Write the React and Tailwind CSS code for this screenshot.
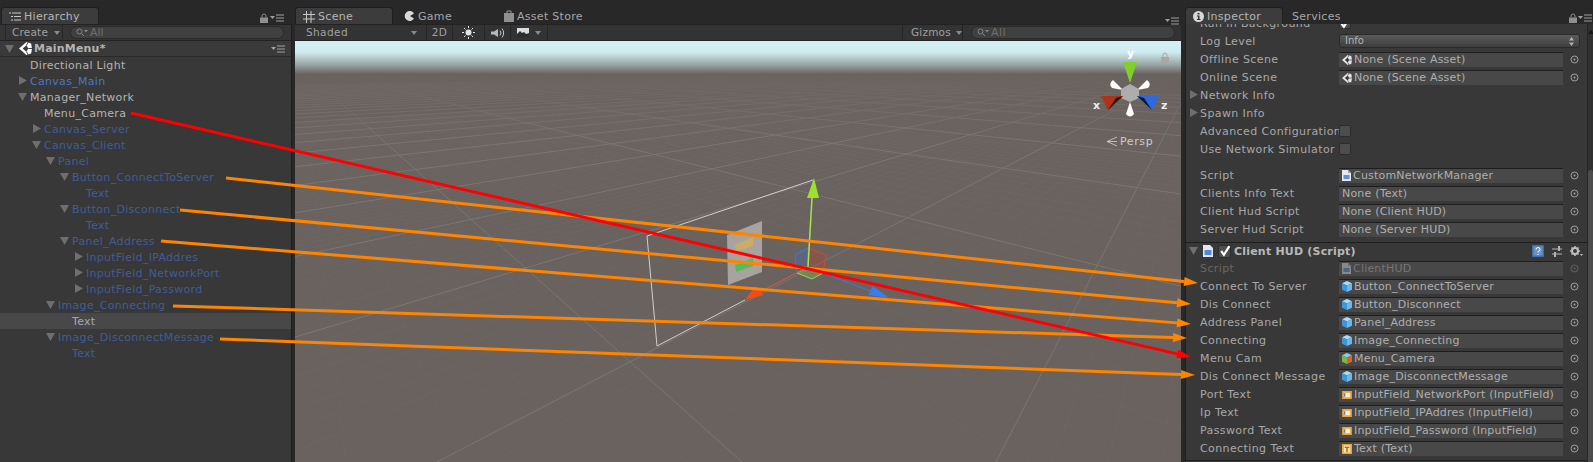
import React from 'react'

const TREE = [
  { label: 'Directional Light', depth: 0, tone: 'plain' },
  { label: 'Canvas_Main', depth: 0, arrow: 'right', tone: 'bright' },
  { label: 'Manager_Network', depth: 0, arrow: 'down', tone: 'plain' },
  { label: 'Menu_Camera', depth: 1, tone: 'plain' },
  { label: 'Canvas_Server', depth: 1, arrow: 'right' },
  { label: 'Canvas_Client', depth: 1, arrow: 'down' },
  { label: 'Panel', depth: 2, arrow: 'down' },
  { label: 'Button_ConnectToServer', depth: 3, arrow: 'down' },
  { label: 'Text', depth: 4 },
  { label: 'Button_Disconnect', depth: 3, arrow: 'down' },
  { label: 'Text', depth: 4 },
  { label: 'Panel_Address', depth: 3, arrow: 'down' },
  { label: 'InputField_IPAddres', depth: 4, arrow: 'right' },
  { label: 'InputField_NetworkPort', depth: 4, arrow: 'right' },
  { label: 'InputField_Password', depth: 4, arrow: 'right' },
  { label: 'Image_Connecting', depth: 2, arrow: 'down' },
  { label: 'Text', depth: 3, selected: true },
  { label: 'Image_DisconnectMessage', depth: 2, arrow: 'down' },
  { label: 'Text', depth: 3 },
]

const MANAGER_FIELDS = [
  { label: 'Script', value: 'CustomNetworkManager', icon: 'script' },
  { label: 'Clients Info Text', value: 'None (Text)' },
  { label: 'Client Hud Script', value: 'None (Client HUD)' },
  { label: 'Server Hud Script', value: 'None (Server HUD)' },
]

const HUD_FIELDS = [
  { label: 'Script', value: 'ClientHUD', icon: 'script', dim: true },
  { label: 'Connect To Server', value: 'Button_ConnectToServer', icon: 'prefab' },
  { label: 'Dis Connect', value: 'Button_Disconnect', icon: 'prefab' },
  { label: 'Address Panel', value: 'Panel_Address', icon: 'prefab' },
  { label: 'Connecting', value: 'Image_Connecting', icon: 'prefab' },
  { label: 'Menu Cam', value: 'Menu_Camera', icon: 'camera' },
  { label: 'Dis Connect Message', value: 'Image_DisconnectMessage', icon: 'prefab' },
  { label: 'Port Text', value: 'InputField_NetworkPort (InputField)', icon: 'input' },
  { label: 'Ip Text', value: 'InputField_IPAddres (InputField)', icon: 'input' },
  { label: 'Password Text', value: 'InputField_Password (InputField)', icon: 'input' },
  { label: 'Connecting Text', value: 'Text (Text)', icon: 'text' },
]

const ARROWS = [
  { from: [226, 178], to: [1198, 283], color: '#ff8400' },
  { from: [180, 210], to: [1191, 304], color: '#ff8400' },
  { from: [161, 241], to: [1191, 324], color: '#ff8400' },
  { from: [173, 306], to: [1187, 338], color: '#ff8400' },
  { from: [220, 339], to: [1195, 375], color: '#ff8400' },
  { from: [131, 113], to: [1191, 357], color: '#ff0000' },
]

// grid families meet the bottom edge at even steps, then run to a vanishing point
const BOTTOM = 462
const HORIZON = 66
const LEFT_VP = 300
const RIGHT_VP = 1200
const RISING = Array.from({ length: 34 }, (_, i) => 996 - 559 * i)
const FALLING = Array.from({ length: 14 }, (_, i) => 742 + 1142 * (i - 3))
const RISING_MINOR = Array.from({ length: 120 }, (_, i) => 1555 - 55.9 * i)
const FALLING_MINOR = Array.from({ length: 60 }, (_, i) => 4000 - 114.2 * i)

function Triangle({ dir = 'down', className = 'fill-[#6e6e6e]' }) {
  const points = dir === 'down' ? '0,1 9,1 4.5,9' : '1,0 9,4.5 1,9'
  return (
    <svg width="10" height="10" viewBox="0 0 10 10" className="shrink-0">
      <polygon points={points} className={className} />
    </svg>
  )
}

function Caret() {
  return (
    <svg width="6" height="4" viewBox="0 0 6 4" className="shrink-0">
      <polygon points="0,0 6,0 3,4" fill="#8a8a8a" />
    </svg>
  )
}

function PanelMenu() {
  return (
    <svg width="15" height="8" viewBox="0 0 15 8" className="shrink-0">
      <polygon points="0,2 5,2 2.5,5" fill="#a0a0a0" />
      <path d="M6 1h8M6 4h8M6 7h8" stroke="#a0a0a0" strokeWidth="1" />
    </svg>
  )
}

function Lock({ color = '#8f8f8f' }) {
  return (
    <svg width="8" height="10" viewBox="0 0 8 10" className="shrink-0">
      <path d="M2 4.5V3a2 2 0 0 1 4 0v1.5" fill="none" stroke={color} />
      <rect x="0" y="4.5" width="8" height="5.5" fill={color} />
    </svg>
  )
}

function UnityLogo({ size = 13, color = '#ffffff' }) {
  return (
    <svg width={size} height={size} viewBox="0 0 14 14" className="shrink-0">
      <path d="M8 0l5 1.5L14 7l-1 5.500L8 14 0 7z" fill={color} />
      <path d="M4 7l4-3.500L10 7l-2 3.500z" fill="#383838" />
      <path d="M8 3.500L10 0M10 7h4M8 10.500L10 14" stroke="#383838" />
    </svg>
  )
}

function ScriptIcon({ dim }) {
  return (
    <svg width="9" height="11" viewBox="0 0 9 11" className="shrink-0" opacity={dim ? 0.4 : 1}>
      <path d="M0 0h6l3 3v8H0z" fill="#e4e8ee" />
      <path d="M6 0l3 3H6z" fill="#9aa4b4" />
      <rect x="1.500" y="5" width="6" height="4" fill="#5c8fd6" />
    </svg>
  )
}

function CubeIcon({ top, left, right }) {
  return (
    <svg width="10" height="11" viewBox="0 0 11 12" className="shrink-0">
      <polygon points="5.500,0 11,2.500 5.500,5 0,2.500" fill={top} />
      <polygon points="0,2.500 5.500,5 5.500,12 0,9.500" fill={left} />
      <polygon points="11,2.500 5.500,5 5.500,12 11,9.500" fill={right} />
    </svg>
  )
}

function InputIcon() {
  return (
    <svg width="10" height="8" viewBox="0 0 11 9" className="shrink-0">
      <rect width="11" height="9" fill="#e8a33d" />
      <rect x="2" y="2" width="7" height="5" fill="#f1efe6" />
      <rect x="2.500" y="2.500" width="1" height="4" fill="#444444" />
    </svg>
  )
}

function TextIcon() {
  return (
    <svg width="10" height="10" viewBox="0 0 11 11" className="shrink-0">
      <rect width="11" height="11" fill="#eba83f" />
      <rect x="2" y="1.500" width="7" height="8" fill="#f7e3b5" />
      <path d="M3 3h5v1.500H6.300V9H4.700V4.500H3z" fill="#a8691a" />
    </svg>
  )
}

function FieldIcon({ type, dim }) {
  if (type === 'script') return <ScriptIcon dim={dim} />
  if (type === 'prefab') return <CubeIcon top="#a9dcf8" left="#3f96d8" right="#6cb8ea" />
  if (type === 'camera') return <CubeIcon top="#8ecbe8" left="#7ab648" right="#d8641e" />
  if (type === 'input') return <InputIcon />
  if (type === 'text') return <TextIcon />
  if (type === 'scene') return <UnityLogo size={10} color="#e6e6e6" />
  return null
}

function Tab({ active, icon, label, className = '' }) {
  return (
    <div
      className={`h-[17px] pt-[1px] flex items-center gap-[3px] text-[11px] tracking-[0.3px] ${
        active ? 'w-[98px] pl-[7px] rounded-t-[3px] bg-[#3c3c3c] border border-b-0 border-[#1f1f1f] text-[#b4b4b4]' : 'text-[#a6a6a6]'
      } ${className}`}
    >
      {icon}
      <span>{label}</span>
    </div>
  )
}

function SearchBox({ className = '' }) {
  return (
    <div className={`h-[13px] rounded-full bg-[#404040] border border-[#2a2a2a] flex items-center pl-[5px] gap-[1px] text-[#6f6f6f] ${className}`}>
      <svg width="13" height="9" viewBox="0 0 13 9" className="shrink-0">
        <circle cx="3.500" cy="3.500" r="2.500" fill="none" stroke="#858585" />
        <path d="M5.500 5.500L8 8" stroke="#858585" />
        <polygon points="8,2 12,2 10,4.500" fill="#858585" />
      </svg>
      <span className="text-[11px] leading-none">All</span>
    </div>
  )
}

function TreeRow({ label, depth, arrow, tone, selected }) {
  const textColor = tone === 'plain' ? 'text-[#b4b4b4]' : tone === 'bright' ? 'text-[#4a76c6]' : selected ? 'text-[#a3a7bb]' : 'text-[#3f5c98]'
  return (
    <div
      className={`h-[16px] flex items-center ${selected ? 'bg-[#484848]' : ''}`}
      style={{ paddingLeft: 18 + depth * 14 }}
    >
      <span className="w-[12px] flex items-center shrink-0">{arrow && <Triangle dir={arrow} />}</span>
      <span className={`${textColor} whitespace-nowrap tracking-[0.3px]`}>{label}</span>
    </div>
  )
}

function Hierarchy() {
  return (
    <div className="w-[295px] shrink-0 flex flex-col">
      <div className="h-[24px] pt-[7px] flex items-start">
        <Tab
          active
          className="ml-[1px]"
          label="Hierarchy"
          icon={
            <svg width="12" height="9" viewBox="0 0 12 9" className="shrink-0">
              <path d="M0 1h2M3 1h9M2 4.500h2M5 4.500h7M2 8h2M5 8h7" stroke="#c8c8c8" />
            </svg>
          }
        />
        <div className="ml-auto mr-[10px] mt-[6px] flex items-center gap-[2px]">
          <Lock />
          <PanelMenu />
        </div>
      </div>
      <div className="w-[292px] flex-1 flex flex-col bg-[#383838] border-r border-[#1c1c1c]">
        <div className="h-[17px] bg-[#353535] border-y border-[#222222] flex items-center">
          <div className="w-[58px] h-full border-x border-[#282828] ml-[5px] flex items-center gap-[6px] pl-[6px] text-[#a0a0a0] text-[10.500px] tracking-[0.2px]">
            Create
            <Caret />
          </div>
          <SearchBox className="w-[214px] ml-[7px]" />
        </div>
        <div className="h-[16px] bg-[#3a3a3a] border-b border-[#282828] flex items-center pl-[5px] pr-[5px]">
          <Triangle />
          <span className="ml-[4px]">
            <UnityLogo />
          </span>
          <span className="ml-[2px] font-bold text-[#b4b4b4] tracking-[0.2px]">MainMenu*</span>
          <span className="ml-auto">
            <PanelMenu />
          </span>
        </div>
        {TREE.map((row, i) => (
          <TreeRow key={i} {...row} />
        ))}
      </div>
    </div>
  )
}

function ToolCell({ className = '', children }) {
  return <div className={`h-full flex items-center justify-center border-r border-[#252525] ${className}`}>{children}</div>
}

function SceneDrawing() {
  return (
    <svg viewBox="295 41 886 421" className="absolute inset-0 w-full h-full">
      <defs>
        <linearGradient id="sky" x1="0" y1="0" x2="0" y2="1">
          <stop offset="0" stopColor="#d3eff3" />
          <stop offset="0.11" stopColor="#d0ecf0" />
          <stop offset="0.24" stopColor="#98a3a4" />
          <stop offset="0.33" stopColor="#6a625e" />
          <stop offset="0.6" stopColor="#6a625e" stopOpacity="0.55" />
          <stop offset="1" stopColor="#6a625e" stopOpacity="0" />
        </linearGradient>
      </defs>

      {RISING_MINOR.map((x) => (
        <line key={x} x1={x} y1={BOTTOM} x2={RIGHT_VP} y2={HORIZON} stroke="#7d7875" strokeOpacity="0.14" />
      ))}
      {FALLING_MINOR.map((x) => (
        <line key={x} x1={x} y1={BOTTOM} x2={LEFT_VP} y2={HORIZON} stroke="#7d7875" strokeOpacity="0.14" />
      ))}
      {RISING.map((x) => (
        <line key={x} x1={x} y1={BOTTOM} x2={RIGHT_VP} y2={HORIZON} stroke="#7d7875" strokeOpacity="0.85" />
      ))}
      {FALLING.map((x) => (
        <line key={x} x1={x} y1={BOTTOM} x2={LEFT_VP} y2={HORIZON} stroke="#7d7875" strokeOpacity="0.85" />
      ))}
      <rect x="295" y="41" width="886" height="100" fill="url(#sky)" />

      {/* rect tool outline of the canvas */}
      <path d="M745 300L657 346L647 236L813 180" fill="none" stroke="#cfcfcf" strokeWidth="1" />

      {/* canvas with its two children */}
      <polygon points="727,235 762,221 762,272 728,285" fill="#a8a39f" />
      <polygon points="735,245 753,237 753,246 736,252" fill="#c9ad66" />
      <polygon points="735,265 753,258 753,266 736,272" fill="#5cb85c" />

      {/* move gizmo */}
      <polygon points="808,248 795,255 797,273 808,267" fill="#4a6aa8" fillOpacity="0.45" stroke="#3d78e0" />
      <polygon points="808,248 826,255 823,273 808,267" fill="#a84a3a" fillOpacity="0.45" stroke="#d04a30" />
      <polygon points="797,273 812,279 823,273 808,267" fill="#8cc84a" fillOpacity="0.35" stroke="#9ad24a" />
      <line x1="808" y1="267" x2="812" y2="198" stroke="#a8e44a" strokeWidth="1.500" />
      <polygon points="807,198 819,198 814,178" fill="#9be22d" />
      <line x1="808" y1="267" x2="760" y2="292" stroke="#e05a3a" />
      <polygon points="745,300 755,286 764,295" fill="#f04a1e" />
      <line x1="808" y1="267" x2="870" y2="291" stroke="#3d78e0" />
      <polygon points="889,298 873,286 868,295" fill="#3a7bf0" />

      {/* orientation gizmo */}
      <polygon points="1123,62 1137,62 1130,83" fill="#7fd02c" />
      <path d="M1123 90L1112 88Q1108 84 1113 80z" fill="#ffffff" />
      <path d="M1137 90L1148 88Q1152 84 1147 80z" fill="#ffffff" />
      <path d="M1130 102L1134 114Q1130 119 1126 114z" fill="#ffffff" />
      <polygon points="1130,84 1139,89 1139,98 1130,102 1121,98 1121,89" fill="#adadad" />
      <polygon points="1101,96 1123,96 1108,110" fill="#b03218" />
      <polygon points="1137,96 1159,96 1152,110" fill="#2f68e0" />
      <polygon points="1144,98 1137,96 1152,110" fill="#10182c" />
      <polygon points="1116,98 1123,96 1108,110" fill="#2a120c" />

      {/* lock on the view */}
      <rect x="1161" y="57" width="8" height="6" fill="#a8a8a8" />
      <path d="M1163 57v-2a2 2 0 0 1 4 0v2" fill="none" stroke="#a8a8a8" />

      {/* persp marker */}
      <path d="M1107 141.500L1117 137M1107 141.500L1117 146M1107 141.500h10" fill="none" stroke="#d0d0d0" strokeWidth="0.800" />
    </svg>
  )
}

function Scene() {
  return (
    <div className="w-[886px] shrink-0 flex flex-col">
      <div className="h-[24px] pt-[7px] flex items-start relative">
        <Tab
          active
          label="Scene"
          icon={
            <svg width="12" height="12" viewBox="0 0 12 12" className="shrink-0">
              <path d="M3.500 0v12M8 0v12M0 3.500h12M0 8h12" stroke="#c8c8c8" />
            </svg>
          }
        />
        <Tab
          className="ml-[11px]"
          label="Game"
          icon={
            <svg width="11" height="10" viewBox="0 0 11 10" className="shrink-0">
              <path d="M10 2.500A5 5 0 1 0 10 7.500L6 5z" fill="#d8d8d8" />
            </svg>
          }
        />
        <Tab
          className="ml-[52px]"
          label="Asset Store"
          icon={
            <svg width="10" height="12" viewBox="0 0 10 12" className="shrink-0">
              <path d="M3 3V1h4v2" fill="none" stroke="#999999" />
              <rect y="3" width="10" height="9" fill="#8f8f8f" />
            </svg>
          }
        />
        <span className="absolute right-[1px] top-[17px]">
          <PanelMenu />
        </span>
      </div>
      <div className="h-[17px] bg-[#333333] border-y border-[#222222] flex items-center text-[10.500px] text-[#a0a0a0] tracking-[0.4px]">
        <div className="w-[132px] h-full pl-[11px] pr-[9px] flex items-center justify-between border-r border-[#252525]">
          <span>Shaded</span>
          <Caret />
        </div>
        <ToolCell className="w-[26px]">2D</ToolCell>
        <ToolCell className="w-[32px]">
          <svg width="13" height="13" viewBox="0 0 13 13">
            <circle cx="6.500" cy="6.500" r="3" fill="#e4e4e4" />
            <path d="M6.500 0v2M6.500 11v2M0 6.500h2M11 6.500h2M2 2l1.500 1.500M9.500 9.500L11 11M2 11l1.500-1.500M9.500 3.500L11 2" stroke="#e4e4e4" />
          </svg>
        </ToolCell>
        <ToolCell className="w-[26px]">
          <svg width="14" height="12" viewBox="0 0 14 12">
            <polygon points="0,4.500 3,4.500 7,2 7,10 3,7.500 0,7.500" fill="#b8b8b8" />
            <path d="M9 3.500a4 4 0 0 1 0 5M11 1.500a7 7 0 0 1 0 9" fill="none" stroke="#c8c8c8" />
          </svg>
        </ToolCell>
        <ToolCell className="w-[37px] gap-[6px]">
          <svg width="12" height="9" viewBox="0 0 12 9">
            <rect width="12" height="9" fill="#dcdcdc" />
            <path d="M0 9V6l3-3 2 2 2-1 2 2 3-1v4z" fill="#2c2c2c" />
          </svg>
          <Caret />
        </ToolCell>
        <div className="ml-auto h-full w-[61px] pl-[8px] border-x border-[#252525] flex items-center gap-[5px] tracking-[0.2px]">
          Gizmos
          <Caret />
        </div>
        <SearchBox className="w-[204px] ml-[8px] mr-[6px]" />
      </div>
      <div className="flex-1 relative overflow-hidden bg-[#6a625e]">
        <SceneDrawing />
        <span className="absolute left-[832px] top-[7px] font-bold text-white">y</span>
        <span className="absolute left-[798px] top-[59px] font-bold text-[#eeeeee]">x</span>
        <span className="absolute left-[866px] top-[59px] font-bold text-[#eeeeee]">z</span>
        <span className="absolute left-[825px] top-[95px] text-[#cccccc] tracking-[0.6px]">Persp</span>
      </div>
    </div>
  )
}

function PickerDot() {
  return (
    <svg width="9" height="9" viewBox="0 0 9 9" className="shrink-0">
      <circle cx="4.500" cy="4.500" r="3.500" fill="none" stroke="#a0a0a0" />
      <circle cx="4.500" cy="4.500" r="1" fill="#a0a0a0" />
    </svg>
  )
}

function Label({ dim, children }) {
  return <span className={`w-[139px] shrink-0 whitespace-nowrap tracking-[0.4px] ${dim ? 'text-[#676767]' : 'text-[#a8a8a8]'}`}>{children}</span>
}

function InspectorRow({ children }) {
  return <div className="h-[18px] flex items-center pl-[14px]">{children}</div>
}

function ObjectField({ label, value, icon, dim }) {
  return (
    <InspectorRow>
      <Label dim={dim}>{label}</Label>
      <div
        className={`w-[224px] h-[15px] shrink-0 flex items-center gap-[2px] bg-[#484848] border-t border-[#1e1e1e] whitespace-nowrap tracking-[0.2px] ${
          icon ? 'pl-[3px]' : 'pl-[3px]'
        } ${dim ? 'text-[#757575]' : 'text-[#aeaeae]'}`}
      >
        {icon && <FieldIcon type={icon} dim={dim} />}
        <span>{value}</span>
      </div>
      <span className={`ml-[7px] ${dim ? 'opacity-40' : ''}`}>
        <PickerDot />
      </span>
    </InspectorRow>
  )
}

function Checkbox({ checked, large }) {
  return (
    <span className={`shrink-0 rounded-[2px] bg-[#4d4d4d] border border-[#2c2c2c] flex items-center justify-center ${large ? 'w-[13px] h-[13px]' : 'w-[12px] h-[12px]'}`}>
      {checked && (
        <svg width="12" height="12" viewBox="0 0 11 11" className="shrink-0">
          <path d="M2 5.500L4.500 9L9.500 1" fill="none" stroke="#ffffff" strokeWidth="2" />
        </svg>
      )}
    </span>
  )
}

function FoldRow({ children }) {
  return (
    <div className="h-[18px] flex items-center pl-[3px]">
      <span className="w-[11px]">
        <Triangle dir="right" />
      </span>
      <span className="text-[#a8a8a8] tracking-[0.4px]">{children}</span>
    </div>
  )
}

function Inspector() {
  return (
    <div className="flex-1 min-w-0 flex flex-col ml-[4px]">
      <div className="h-[24px] pt-[7px] flex items-start">
        <Tab
          active
          label="Inspector"
          icon={
            <svg width="11" height="11" viewBox="0 0 11 11" className="shrink-0">
              <circle cx="5.500" cy="5.500" r="5.500" fill="#d8d8d8" />
              <path d="M4.500 2h2v1.500h-2zM4 4.500h2.500V8H7.500v1h-3.500V8h1V5.500H4z" fill="#333333" />
            </svg>
          }
        />
        <Tab className="ml-[9px]" label="Services" />
        <div className="ml-auto mt-[6px] flex items-center gap-[1px]">
          <Lock />
          <PanelMenu />
        </div>
      </div>
      <div className="relative flex-1 bg-[#383838] border-l border-[#1e1e1e] overflow-hidden">
        <div className="-mt-[10px]">
          <InspectorRow>
            <Label>Run in Background</Label>
            <Checkbox checked />
          </InspectorRow>
          <InspectorRow>
            <Label>Log Level</Label>
            <div className="w-[241px] h-[14px] shrink-0 flex items-center justify-between px-[5px] rounded-[3px] border border-[#2a2a2a] bg-[linear-gradient(to_bottom,#5a5a5a,#3e3e3e)] text-[10px] text-[#b4b4b4]">
              <span>Info</span>
              <svg width="5" height="9" viewBox="0 0 5 9">
                <path d="M0 3.500L2.500 0L5 3.500zM0 5.500L2.500 9L5 5.500z" fill="#b0b0b0" />
              </svg>
            </div>
          </InspectorRow>
          <ObjectField label="Offline Scene" value="None (Scene Asset)" icon="scene" />
          <ObjectField label="Online Scene" value="None (Scene Asset)" icon="scene" />
          <FoldRow>Network Info</FoldRow>
          <FoldRow>Spawn Info</FoldRow>
          <InspectorRow>
            <Label>Advanced Configuration</Label>
            <Checkbox />
          </InspectorRow>
          <InspectorRow>
            <Label>Use Network Simulator</Label>
            <Checkbox />
          </InspectorRow>
          <div className="h-[8px]" />
          {MANAGER_FIELDS.map((f) => (
            <ObjectField key={f.label} {...f} />
          ))}
          <div className="h-[4px]" />
          <div className="h-[17px] border-t border-[#1e1e1e] flex items-center pl-[3px]">
            <Triangle />
            <span className="ml-[4px]">
              <svg width="10" height="12" viewBox="0 0 10 12" className="shrink-0">
                <path d="M0 0h7l3 3v9H0z" fill="#e4e8ee" />
                <rect x="1.500" y="5" width="7" height="5" fill="#4f88d8" />
              </svg>
            </span>
            <span className="ml-[5px]">
              <Checkbox checked large />
            </span>
            <span className="ml-[3px] font-bold text-[#b8b8b8] tracking-[0.2px]">Client HUD (Script)</span>
            <div className="ml-auto mr-[10px] flex items-center gap-[8px]">
              <svg width="12" height="12" viewBox="0 0 12 12">
                <rect width="12" height="12" rx="1" fill="#3f6fae" />
                <rect x="1.500" y="1.500" width="9" height="9" fill="#d3e3f2" fillOpacity="0.3" />
                <path d="M4 4.500a2 2 0 1 1 2 2v1M6 9v1" fill="none" stroke="#ffffff" />
              </svg>
              <svg width="10" height="11" viewBox="0 0 10 11">
                <path d="M0 3h6M8 3h2M0 8h2M4 8h6" stroke="#b4b4b4" />
                <rect x="6" y="0" width="2" height="5" fill="#b4b4b4" />
                <rect x="2" y="6" width="2" height="5" fill="#b4b4b4" />
              </svg>
              <svg width="13" height="11" viewBox="0 0 13 11">
                <circle cx="5" cy="5" r="3" fill="none" stroke="#c0c0c0" strokeWidth="2" />
                <path d="M5 0v2M5 8v2M0 5h2M8 5h2M1.500 1.500l1.500 1.500M7 7l1.500 1.500M1.500 8.500L3 7M7 3l1.500-1.500" stroke="#c0c0c0" strokeWidth="1.500" />
                <polygon points="10,8 13,8 11.500,10" fill="#c0c0c0" />
              </svg>
            </div>
          </div>
          {HUD_FIELDS.map((f) => (
            <ObjectField key={f.label} {...f} />
          ))}
          <div className="mt-[3px] border-t border-[#1e1e1e]" />
        </div>
        {/* scrollbar */}
        <div className="absolute right-0 top-0 bottom-0 w-[6px] bg-[#303030] border-l border-[#262626] flex flex-col items-center">
          <span className="mt-[6px] w-0 h-0 border-x-[3px] border-x-transparent border-b-[4px] border-b-[#161616]" />
          <span className="mt-[136px] flex-1 w-full rounded-t-[3px] bg-[#4c4c4c]" />
        </div>
      </div>
    </div>
  )
}

function AnnotationArrows() {
  return (
    <svg viewBox="0 0 1593 462" className="absolute inset-0 w-full h-full pointer-events-none">
      {ARROWS.map(({ from, to, color }) => {
        const dx = to[0] - from[0]
        const dy = to[1] - from[1]
        const len = Math.hypot(dx, dy)
        const ux = dx / len
        const uy = dy / len
        const bx = to[0] - ux * 14
        const by = to[1] - uy * 14
        return (
          <g key={from[0]}>
            <line x1={from[0]} y1={from[1]} x2={bx} y2={by} stroke={color} strokeWidth="3" />
            <polygon
              points={`${to[0]},${to[1]} ${bx - uy * 4.5},${by + ux * 4.5} ${bx + uy * 4.5},${by - ux * 4.5}`}
              fill={color}
            />
          </g>
        )
      })}
    </svg>
  )
}

export default function App() {
  return (
    <div className="relative w-[1593px] h-[462px] overflow-hidden flex bg-[#282828] text-[11px] leading-none font-['DejaVu_Sans',sans-serif]">
      <Hierarchy />
      <Scene />
      <Inspector />
      <AnnotationArrows />
    </div>
  )
}
